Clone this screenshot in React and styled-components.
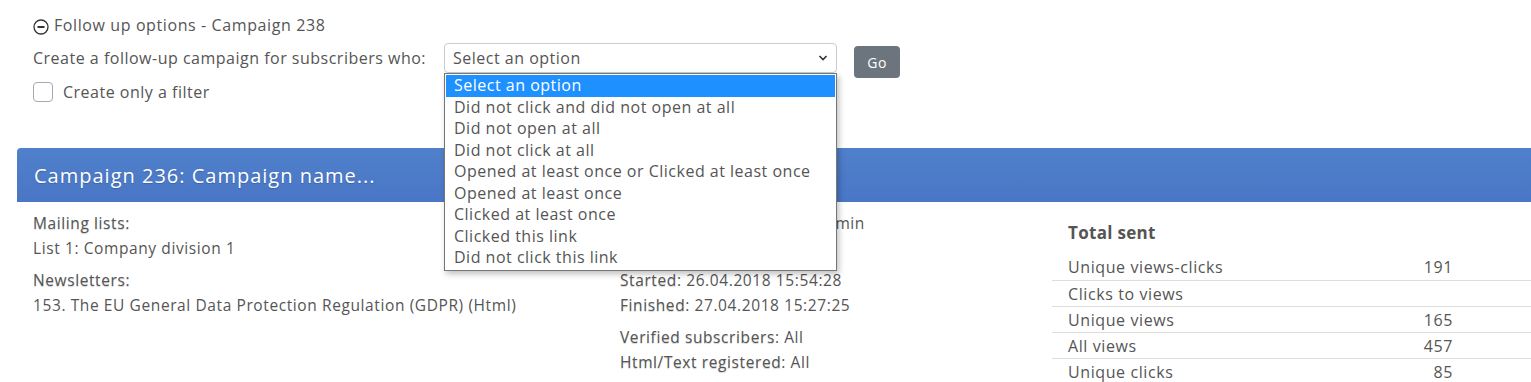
import React from "react";
import styled, { createGlobalStyle } from "styled-components";

const Global = createGlobalStyle`
  html, body { margin: 0; padding: 0; background: #fff; overflow: hidden; }
  body { font-family: "Open Sans", Lato, sans-serif; color: #555; }
  * { box-sizing: border-box; }
`;

const Page = styled.div`
  width: 1531px;
  height: 382px;
  padding: 14px 0 0 17px;
  position: relative;
`;

const FollowUp = styled.section`
  padding: 0 16px;
  height: 134px;
`;

const Heading = styled.div`
  display: flex;
  align-items: center;
  gap: 5px;
  font-size: 16px;
  letter-spacing: 0.6px;
  line-height: 22px;
  height: 22px;
  color: #555;
`;

const Row = styled.div`
  display: flex;
  align-items: flex-start;
  margin-top: 7px;
  height: 30px;
`;

const Label = styled.label`
  font-size: 16px;
  letter-spacing: 0.5px;
  line-height: 30px;
  width: 411px;
  flex: none;
  white-space: nowrap;
`;

const SelectWrap = styled.div`
  position: relative;
  width: 393px;
  flex: none;
`;

const SelectBox = styled.div`
  height: 30px;
  border: 1px solid #ccc;
  border-radius: 4px;
  display: flex;
  align-items: center;
  justify-content: space-between;
  padding: 0 8px 0 8px;
  font-size: 16px;
  letter-spacing: 0.5px;
  color: #555;
  background: #fff;
`;

const List = styled.ul`
  position: absolute;
  left: 0;
  top: 30px;
  width: 393px;
  margin: 0;
  padding: 1px;
  list-style: none;
  background: #fff;
  border: 1px solid #767676;
  box-shadow: 2px 3px 6px rgba(0, 0, 0, 0.25);
  z-index: 10;
`;

const Option = styled.li`
  height: 21.5px;
  line-height: 21.5px;
  padding-left: 8px;
  font-size: 16px;
  letter-spacing: 0.5px;
  white-space: nowrap;
  color: ${(p) => (p.$active ? "#fff" : "#555")};
  background: ${(p) => (p.$active ? "#1e90ff" : "transparent")};
`;

const GoButton = styled.button`
  margin-left: 17px;
  margin-top: 3px;
  width: 46px;
  height: 32px;
  border: none;
  border-radius: 4px;
  background: #6c757d;
  color: #fff;
  font-family: inherit;
  font-size: 14px;
  letter-spacing: 0.4px;
  padding: 0;
`;

const CheckRow = styled.div`
  display: flex;
  align-items: center;
  gap: 10px;
  margin-top: 9px;
  height: 20px;
  font-size: 16px;
  letter-spacing: 0.5px;
`;

const CheckBox = styled.span`
  width: 20px;
  height: 20px;
  border: 1px solid #aaa;
  border-radius: 4px;
  background: #fff;
`;

const Panel = styled.section``;

const PanelHeader = styled.div`
  height: 54px;
  border-radius: 4px 0 0 0;
  background: linear-gradient(#507fcc, #4977c5);
  color: #fff;
  font-size: 20px;
  letter-spacing: 1px;
  display: flex;
  align-items: center;
  padding-left: 17px;
  text-shadow: 0 1px 1px rgba(0, 0, 0, 0.2);
`;

const Body = styled.div`
  display: grid;
  grid-template-columns: 587px 432px 1fr;
  padding-left: 16px;
  padding-top: 9px;
`;

const Col = styled.div`
  display: flex;
  flex-direction: column;
  font-size: 15.5px;
  letter-spacing: 0.6px;
`;

const Line = styled.div`
  line-height: 24.5px;
  white-space: nowrap;
  margin-top: ${(p) => p.$gap || 0}px;
  text-shadow: ${(p) => (p.$label ? "0 1px 1px rgba(0,0,0,0.18)" : "none")};
`;

const Strong = styled.span`
  text-shadow: 0 1px 1px rgba(0, 0, 0, 0.18);
`;

const StatsCol = styled.div`
  padding-top: 10px;
`;

const StatsTitle = styled.div`
  font-weight: 700;
  font-size: 17px;
  letter-spacing: 0.3px;
  padding-left: 16px;
  height: 24px;
  line-height: 24px;
  margin-bottom: 9px;
`;

const StatRow = styled.div`
  display: grid;
  grid-template-columns: 1fr 120px;
  height: 26px;
  align-items: center;
  padding: 0 78px 0 16px;
  border-top: ${(p) => (p.$first ? "none" : "1px solid #ddd")};
  font-size: 16px;
  letter-spacing: 0.6px;
`;

const StatValue = styled.span`
  text-align: right;
`;

function MinusCircle() {
  return (
    <svg width="16" height="16" viewBox="0 0 16 16" style={{ marginTop: 4 }}>
      <circle cx="8" cy="8" r="7" fill="none" stroke="#333" strokeWidth="1.3" />
      <rect x="4.5" y="7" width="7" height="2" fill="#333" />
    </svg>
  );
}

function Chevron() {
  return (
    <svg width="10" height="8" viewBox="0 0 10 8">
      <path d="M1.5 2 L5 5.5 L8.5 2" fill="none" stroke="#333" strokeWidth="1.6" />
    </svg>
  );
}

const options = [
  "Select an option",
  "Did not click and did not open at all",
  "Did not open at all",
  "Did not click at all",
  "Opened at least once or Clicked at least once",
  "Opened at least once",
  "Clicked at least once",
  "Clicked this link",
  "Did not click this link",
];

const stats = [
  ["Unique views-clicks", "191"],
  ["Clicks to views", ""],
  ["Unique views", "165"],
  ["All views", "457"],
  ["Unique clicks", "85"],
];

export default function App() {
  return (
    <>
      <Global />
      <Page>
        <FollowUp>
          <Heading>
            <MinusCircle />
            <span>Follow up options - Campaign 238</span>
          </Heading>
          <Row>
            <Label>Create a follow-up campaign for subscribers who:</Label>
            <SelectWrap>
              <SelectBox>
                <span>Select an option</span>
                <Chevron />
              </SelectBox>
              <List>
                {options.map((o, i) => (
                  <Option key={o} $active={i === 0}>
                    {o}
                  </Option>
                ))}
              </List>
            </SelectWrap>
            <GoButton>Go</GoButton>
          </Row>
          <CheckRow>
            <CheckBox />
            <span>Create only a filter</span>
          </CheckRow>
        </FollowUp>
        <Panel>
          <PanelHeader>Campaign 236: Campaign name...</PanelHeader>
          <Body>
            <Col>
              <Line $label>Mailing lists:</Line>
              <Line>List 1: Company division 1</Line>
              <Line $label $gap={8}>Newsletters:</Line>
              <Line>153. The EU General Data Protection Regulation (GDPR) (Html)</Line>
            </Col>
            <Col>
              <Line>Sent by: the newsletter's admin</Line>
              <Line>Type: standard</Line>
              <Line $gap={8}>
                <Strong>Started</Strong>: 26.04.2018 15:54:28
              </Line>
              <Line>
                <Strong>Finished</Strong>: 27.04.2018 15:27:25
              </Line>
              <Line $gap={8}>
                <Strong>Verified subscribers</Strong>: All
              </Line>
              <Line>
                <Strong>Html/Text registered</Strong>: All
              </Line>
            </Col>
            <StatsCol>
              <StatsTitle>Total sent</StatsTitle>
              {stats.map(([k, v], i) => (
                <StatRow key={k} $first={i === 0}>
                  <span>{k}</span>
                  <StatValue>{v}</StatValue>
                </StatRow>
              ))}
            </StatsCol>
          </Body>
        </Panel>
      </Page>
    </>
  );
}
